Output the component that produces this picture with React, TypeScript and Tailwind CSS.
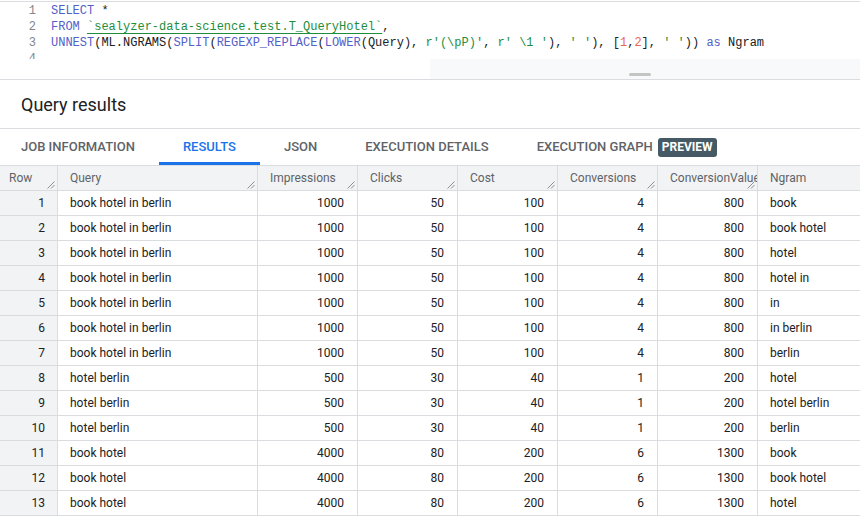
import type { ReactNode } from 'react'

type Row = {
  query: string
  impressions: number
  clicks: number
  cost: number
  conversions: number
  value: number
  ngram: string
}

const rows: Row[] = [
  ...['book', 'book hotel', 'hotel', 'hotel in', 'in', 'in berlin', 'berlin'].map((ngram) => ({
    query: 'book hotel in berlin',
    impressions: 1000,
    clicks: 50,
    cost: 100,
    conversions: 4,
    value: 800,
    ngram,
  })),
  ...['hotel', 'hotel berlin', 'berlin'].map((ngram) => ({
    query: 'hotel berlin',
    impressions: 500,
    clicks: 30,
    cost: 40,
    conversions: 1,
    value: 200,
    ngram,
  })),
  ...['book', 'book hotel', 'hotel'].map((ngram) => ({
    query: 'book hotel',
    impressions: 4000,
    clicks: 80,
    cost: 200,
    conversions: 6,
    value: 1300,
    ngram,
  })),
]

const columns = ['Row', 'Query', 'Impressions', 'Clicks', 'Cost', 'Conversions', 'ConversionValue', 'Ngram']

const tabs = ['JOB INFORMATION', 'RESULTS', 'JSON', 'EXECUTION DETAILS', 'EXECUTION GRAPH']

const K = ({ children }: { children: ReactNode }) => <span className="text-[#5261c8]">{children}</span>
const S = ({ children }: { children: ReactNode }) => <span className="text-[#1e8e3e]">{children}</span>
const N = ({ children }: { children: ReactNode }) => <span className="text-[#e8674f]">{children}</span>

function Grip() {
  return (
    <svg className="absolute right-[2px] bottom-[1px] w-2 h-2" viewBox="0 0 8 8">
      <line x1="0.5" y1="7.5" x2="7.5" y2="0.5" stroke="#80868b" strokeWidth="0.9" />
      <line x1="4" y1="7.5" x2="7.5" y2="4" stroke="#80868b" strokeWidth="0.9" />
    </svg>
  )
}

function Editor() {
  return (
    <div className="border-t border-b border-[#dadce0] mt-px">
      <div className="h-[57px] overflow-hidden flex pt-[1px] font-['Liberation_Mono',monospace] text-[12px] leading-[16px] text-[#202124]">
        <div className="w-[36px] text-right text-[#80868b]">
          <div>1</div>
          <div>2</div>
          <div>3</div>
          <div>4</div>
        </div>
        <div className="pl-[15px] whitespace-pre">
          <div>
            <K>SELECT</K> *
          </div>
          <div>
            <K>FROM</K>{' '}
            <span className="text-[#1e8e3e] underline decoration-[#1e8e3e] underline-offset-[3px]">
              `sealyzer-data-science.test.T_QueryHotel`
            </span>
            ,
          </div>
          <div>
            <K>UNNEST</K>(ML.NGRAMS(<K>SPLIT</K>(<K>REGEXP_REPLACE</K>(<K>LOWER</K>(Query), <S>r'(\pP)'</S>, <S>r' \1 '</S>), <S>' '</S>), [<N>1</N>,<N>2</N>], <S>' '</S>)) <K>as</K> Ngram
          </div>
          <div>&nbsp;</div>
        </div>
      </div>
      <div className="h-[20px] flex">
        <div className="w-[430px]" />
        <div className="flex-1 bg-[#f8f9fa] flex items-end pb-[3px]">
          <div className="ml-[199px] w-[22px] h-[3px] bg-[#c4c4c4] rounded-sm" />
        </div>
      </div>
    </div>
  )
}

function Tabs() {
  return (
    <div className="flex h-[37px] text-[13px] font-medium text-[#5f6368] border-t border-[#dadce0]">
      {tabs.map((t, i) => {
        const active = t === 'RESULTS'
        return (
          <div
            key={t}
            className={`relative flex items-center ${i === 0 ? 'pl-[21px] pr-6' : 'px-6'} ${active ? 'text-[#1a73e8]' : ''}`}
          >
            {t}
            {t === 'EXECUTION GRAPH' && (
              <span className="ml-[5px] bg-[#455a64] text-white text-[12px] font-bold rounded-[3px] px-[4px] h-[19px] flex items-center">
                PREVIEW
              </span>
            )}
            {active && <div className="absolute left-0 right-0 bottom-0 h-[3px] bg-[#1a73e8]" />}
          </div>
        )
      })}
    </div>
  )
}

function Table() {
  const grid = 'grid grid-cols-[58px_200px_100px_100px_100px_100px_100px_102px]'
  const numCell = 'h-[25px] border-r border-b border-[#dadce0] flex items-center justify-end pr-[13px]'
  return (
    <div className="border-t border-[#dadce0] text-[12px]">
      <div className={`${grid} bg-[#f1f3f4] text-[#5f6368]`}>
        {columns.map((c, i) => (
          <div
            key={c}
            className={`relative h-[25px] border-b border-[#dadce0] flex items-center overflow-hidden whitespace-nowrap ${i === 0 ? 'pl-[9px]' : 'pl-3'} ${i < 7 ? 'border-r' : ''}`}
          >
            {c}
            {i < 7 && <Grip />}
          </div>
        ))}
      </div>
      {rows.map((r, i) => (
        <div key={i} className={`${grid} text-[#202124]`}>
          <div className="h-[25px] bg-[#f1f3f4] border-r border-b border-[#dadce0] flex items-center justify-end pr-3">
            {i + 1}
          </div>
          <div className="h-[25px] border-r border-b border-[#dadce0] flex items-center pl-3">{r.query}</div>
          <div className={numCell}>{r.impressions}</div>
          <div className={numCell}>{r.clicks}</div>
          <div className={numCell}>{r.cost}</div>
          <div className={numCell}>{r.conversions}</div>
          <div className={numCell}>{r.value}</div>
          <div className="h-[25px] border-b border-[#dadce0] flex items-center pl-3">{r.ngram}</div>
        </div>
      ))}
    </div>
  )
}

export default function App() {
  return (
    <div className="w-[860px] h-[516px] overflow-hidden bg-white font-['Roboto',sans-serif]">
      <Editor />
      <div className="h-[48px] flex items-center pl-[21px] text-[18px] text-[#202124]">Query results</div>
      <Tabs />
      <Table />
    </div>
  )
}
